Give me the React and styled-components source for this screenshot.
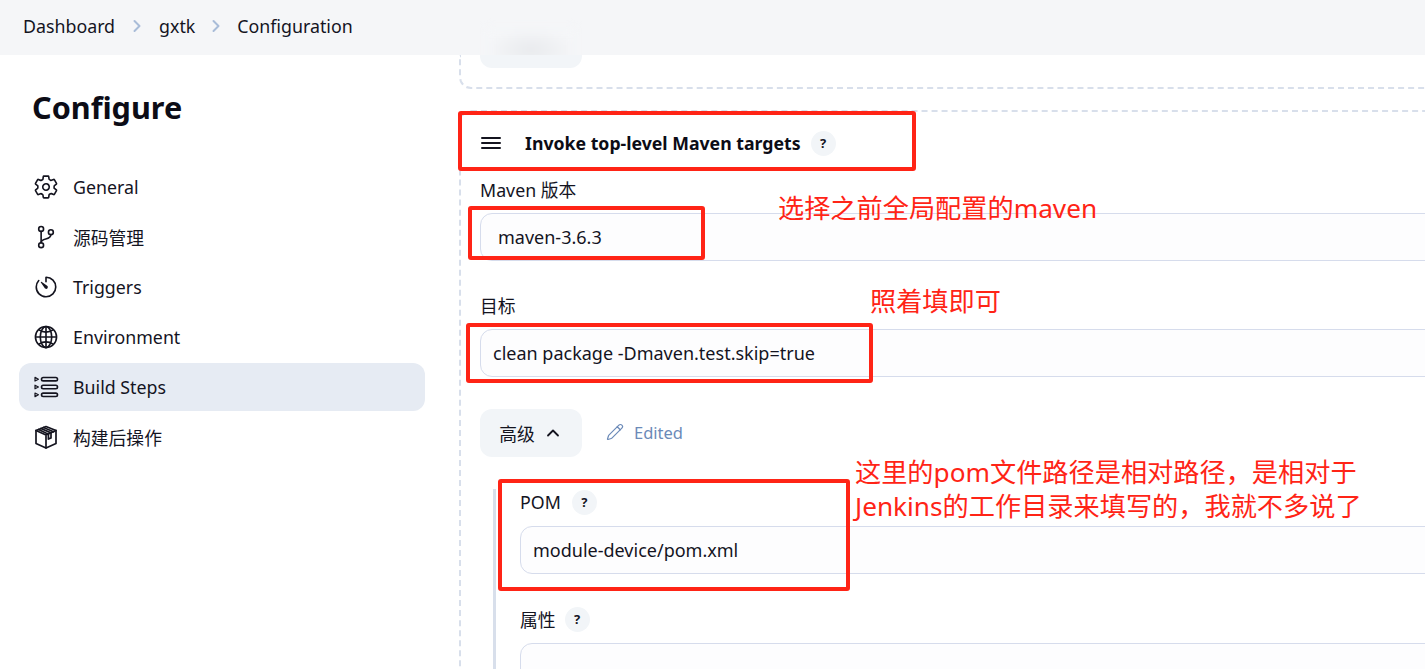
import React from "react";
import styled, { createGlobalStyle } from "styled-components";
import { IoSettingsOutline, IoGitBranchOutline, IoTimerOutline, IoGlobeOutline } from "react-icons/io5";
import { ChevronRight, ChevronUp, Pencil } from "lucide-react";

const GlobalStyle = createGlobalStyle`
  html, body { margin: 0; padding: 0; background: #fff; overflow: hidden; }
  body { font-family: "Noto Sans", "Noto Sans CJK SC", sans-serif; color: #14141f; font-size: 17.8px; }
`;

const BuildStepsIcon = () => (
  <svg width="26" height="26" viewBox="0 0 26 26" fill="none" stroke="#14141f" strokeWidth="1.6" strokeLinejoin="round">
    <rect x="8.5" y="3.5" width="16" height="3.4" rx="1.7" />
    <rect x="8.5" y="11.3" width="16" height="3.4" rx="1.7" />
    <rect x="8.5" y="19.1" width="16" height="3.4" rx="1.7" />
    <path d="M2 3.4l3.4 1.8L2 7zM2 11.2l3.4 1.8L2 14.8zM2 19l3.4 1.8L2 22.6z" strokeWidth="1.2" />
  </svg>
);

const PackageIcon = () => (
  <svg width="26" height="26" viewBox="0 0 26 26" fill="none" stroke="#14141f" strokeWidth="1.7" strokeLinejoin="round" strokeLinecap="round">
    <path d="M13 2.500l10 4v13l-10 4.500-10-4.500v-13z" />
    <path d="M3 6.500l10 4.500 10-4.500M13 11v13" />
    <path d="M8 4.500l10 4.400v5l-2.600 1.200V10.200L5.600 5.500" />
    <path d="M10.500 3.500l10 4.300" />
  </svg>
);

const MenuIcon = () => (
  <svg width="22" height="14" viewBox="0 0 22 14" fill="none" stroke="#14141f" strokeWidth="2" strokeLinecap="round">
    <path d="M2 2h18M2 7h18M2 12h18" />
  </svg>
);

const Page = styled.div`
  position: relative;
  width: 1425px;
  height: 669px;
  overflow: hidden;
  display: flex;
  flex-direction: column;
`;

const Breadcrumbs = styled.nav`
  position: relative;
  overflow: hidden;
  flex: 0 0 55px;
  box-sizing: border-box;
  display: flex;
  align-items: center;
  padding: 0 0 3px 23px;
  background: #f5f6f8;
`;

const Smudge = styled.div`
  position: absolute;
  left: 486px;
  top: 28px;
  width: 90px;
  height: 44px;
  background: radial-gradient(ellipse at center, #e8eaed 0%, #f5f6f8 70%);
  filter: blur(4px);
`;

const Crumb = styled.span`
  position: relative;
`;

const CrumbArrow = styled.span`
  display: flex;
  margin: 0 ${(p) => p.$gap}px;
  color: #a9bcd8;
`;

const Columns = styled.div`
  flex: 1;
  display: flex;
  min-height: 0;
`;

const Sidebar = styled.aside`
  flex: 0 0 459px;
  box-sizing: border-box;
  padding: 28px 34px 0 19px;
`;

const Title = styled.h1`
  margin: 0 0 32px 13px;
  font-size: 30.6px;
  line-height: 48px;
  font-weight: 700;
  color: #0c0c16;
`;

const NavList = styled.div`
  display: flex;
  flex-direction: column;
  gap: 2px;
`;

const NavItem = styled.div`
  height: 48px;
  box-sizing: border-box;
  padding: 0 0 1px 14px;
  display: flex;
  align-items: center;
  gap: 14px;
  border-radius: 12px;
  background: ${(p) => (p.$active ? "#e6ebf3" : "transparent")};
  svg { font-size: 26px; flex: none; margin-top: 1px; }
`;

const Main = styled.main`
  flex: 1;
  min-width: 0;
`;

const PrevCard = styled.div`
  height: 32px;
  margin-right: -20px;
  border: 2px dashed #d8dfeb;
  border-top: 0;
  border-radius: 0 0 12px 12px;
  padding-left: 19px;
`;

const PrevButton = styled.div`
  width: 102px;
  height: 13px;
  background: #f2f5f8;
  border-radius: 0 0 12px 12px;
`;

const Card = styled.section`
  margin: 21px -20px 0 0;
  height: 700px;
  box-sizing: border-box;
  border: 2px dashed #d8dfeb;
  border-radius: 12px;
  padding: 0 0 0 19px;
`;

const CardHeader = styled.div`
  height: 62px;
  margin-bottom: 2px;
  display: flex;
  align-items: center;
`;

const CardTitle = styled.h2`
  margin: 0 10px 0 23px;
  font-size: 17.7px;
  font-weight: 700;
  color: #0c0c16;
`;

const HelpBadge = styled.span`
  width: 25px;
  height: 25px;
  border-radius: 50%;
  background: #f2f5f8;
  display: inline-flex;
  align-items: center;
  justify-content: center;
  font-size: 13px;
  font-weight: 700;
  flex: none;
`;

const Label = styled.div`
  display: flex;
  align-items: center;
  gap: ${(p) => p.$gap || 9}px;
  height: 26px;
  margin-bottom: 11px;
`;

const Field = styled.div`
  margin-bottom: ${(p) => p.$gap || 0}px;
`;

const Input = styled.div`
  height: 48px;
  box-sizing: border-box;
  display: flex;
  align-items: center;
  padding-left: ${(p) => p.$pad || 12}px;
  border: 1px solid #d6dcec;
  border-radius: 12px;
  background: #fdfdfe;
  font-size: 18px;
`;

const AdvancedRow = styled.div`
  display: flex;
  align-items: center;
  gap: 24px;
  margin-bottom: 32px;
`;

const AdvancedButton = styled.div`
  width: 102px;
  height: 48px;
  box-sizing: border-box;
  padding-bottom: 1px;
  display: flex;
  align-items: center;
  justify-content: center;
  gap: 8px;
  background: #f2f5f8;
  border-radius: 12px;
`;

const Edited = styled.div`
  display: flex;
  align-items: center;
  gap: 10px;
  padding-bottom: 2px;
  font-size: 16.5px;
  color: #6b8ab8;
`;

const AdvancedBody = styled.div`
  margin-left: 13px;
  border-left: 3px solid #d8dfeb;
  padding-left: 24px;
`;

const RedBox = styled.div`
  position: absolute;
  left: ${(p) => p.$x}px;
  top: ${(p) => p.$y}px;
  width: ${(p) => p.$w}px;
  height: ${(p) => p.$h}px;
  box-sizing: border-box;
  border: 4px solid #ff2416;
  border-radius: 3px;
`;

const Note = styled.div`
  position: absolute;
  left: ${(p) => p.$x}px;
  top: ${(p) => p.$y}px;
  color: #ff2416;
  font-size: 26.2px;
  line-height: 33.5px;
  white-space: nowrap;
`;

export default function App() {
  return (
    <Page>
      <GlobalStyle />
      <Breadcrumbs>
        <Smudge />
        <Crumb>Dashboard</Crumb>
        <CrumbArrow $gap={12}><ChevronRight size={20} strokeWidth={2.4} /></CrumbArrow>
        <Crumb>gxtk</Crumb>
        <CrumbArrow $gap={11}><ChevronRight size={20} strokeWidth={2.4} /></CrumbArrow>
        <Crumb>Configuration</Crumb>
      </Breadcrumbs>
      <Columns>
        <Sidebar>
          <Title>Configure</Title>
          <NavList>
            <NavItem><IoSettingsOutline />General</NavItem>
            <NavItem><IoGitBranchOutline />源码管理</NavItem>
            <NavItem><IoTimerOutline />Triggers</NavItem>
            <NavItem><IoGlobeOutline />Environment</NavItem>
            <NavItem $active><BuildStepsIcon />Build Steps</NavItem>
            <NavItem><PackageIcon />构建后操作</NavItem>
          </NavList>
        </Sidebar>
        <Main>
          <PrevCard><PrevButton /></PrevCard>
          <Card>
            <CardHeader>
              <MenuIcon />
              <CardTitle>Invoke top-level Maven targets</CardTitle>
              <HelpBadge>?</HelpBadge>
            </CardHeader>
            <Field $gap={31}>
              <Label>Maven 版本</Label>
              <Input $pad={17}>maven-3.6.3</Input>
            </Field>
            <Field $gap={32}>
              <Label>目标</Label>
              <Input>clean package -Dmaven.test.skip=true</Input>
            </Field>
            <AdvancedRow>
              <AdvancedButton>高级 <ChevronUp size={20} strokeWidth={2.2} /></AdvancedButton>
              <Edited><Pencil size={18} strokeWidth={1.6} />Edited</Edited>
            </AdvancedRow>
            <AdvancedBody>
              <Field $gap={32}>
                <Label $gap={11}>POM <HelpBadge>?</HelpBadge></Label>
                <Input>module-device/pom.xml</Input>
              </Field>
              <Field>
                <Label>属性 <HelpBadge>?</HelpBadge></Label>
                <Input />
              </Field>
            </AdvancedBody>
          </Card>
        </Main>
      </Columns>
      <RedBox $x={458} $y={111} $w={458} $h={60} />
      <RedBox $x={468} $y={206} $w={237} $h={54} />
      <RedBox $x={466} $y={323} $w={407} $h={60} />
      <RedBox $x={498} $y={479} $w={352} $h={112} />
      <Note $x={778} $y={192}>选择之前全局配置的maven</Note>
      <Note $x={870} $y={285}>照着填即可</Note>
      <Note $x={855} $y={456}>这里的pom文件路径是相对路径，是相对于<br />Jenkins的工作目录来填写的，我就不多说了</Note>
    </Page>
  );
}
